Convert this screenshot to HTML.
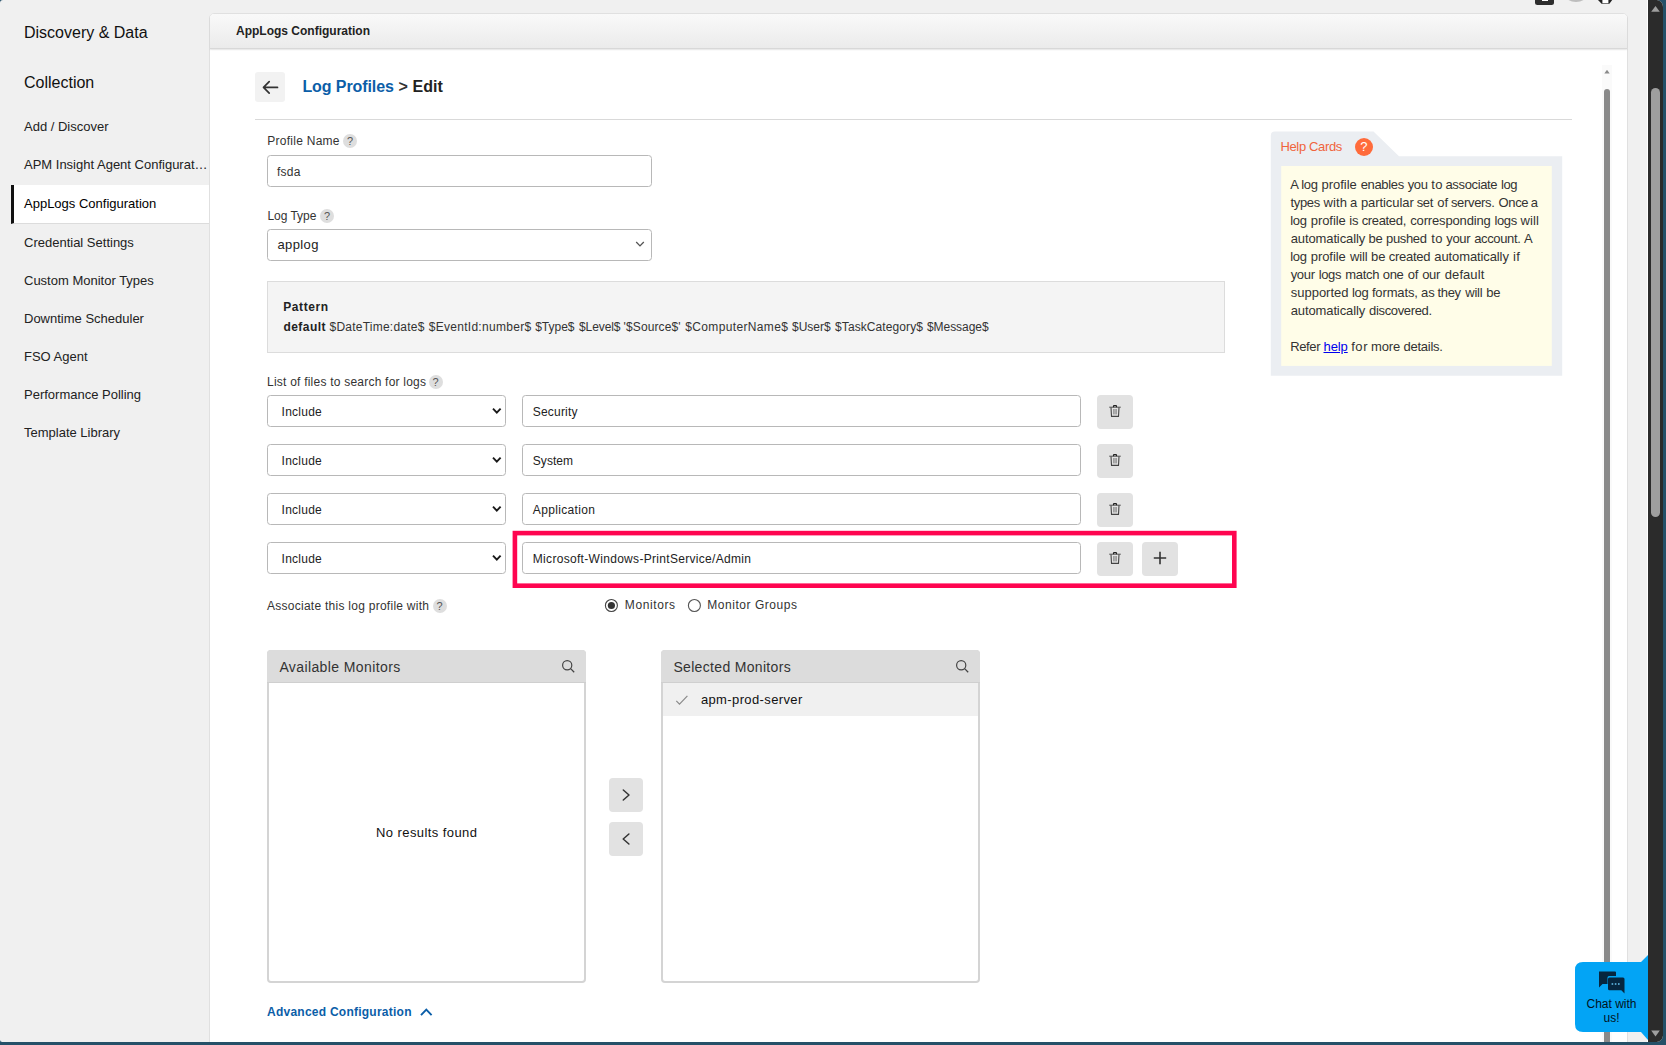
<!DOCTYPE html><html><head><meta charset="utf-8"><title>AppLogs Configuration</title><style>
*{box-sizing:border-box;margin:0;padding:0}
html,body{width:1666px;height:1045px;overflow:hidden;background:#255068;font-family:"Liberation Sans",sans-serif;}
#win{position:absolute;left:0;top:0;width:1663px;height:1042px;overflow:hidden;background:#f0f0f0;border-radius:3px 6.5px 6.5px 2.5px;}
.t{position:absolute;white-space:nowrap;}
.a{position:absolute;}
.inp{position:absolute;background:#fff;border:1px solid #b8b8b8;border-radius:3.5px;}
.btn{position:absolute;background:#e2e2e2;border-radius:4px;}
.q{position:absolute;width:14px;height:14px;border-radius:7px;background:#dedede;color:#555;font-size:11px;line-height:14px;text-align:center;}
</style></head><body>
<div id="win">
<div class="a" style="left:1648px;top:0;width:15px;height:1042px;background:#2b2b2b;"></div>
<div class="a" style="left:1647px;top:0;width:1px;height:1042px;background:#fff;"></div>
<div class="a" style="left:1651px;top:88px;width:9px;height:429px;background:#9e9e9e;border-radius:4.5px;"></div>
<svg class="a" style="left:1648px;top:0" width="15" height="1042"><path d="M3.2 11.8 L7.5 6 L11.8 11.8Z" fill="#9e9e9e"/><path d="M3.2 1030.5 L11.8 1030.5 L7.5 1036.5Z" fill="#9e9e9e"/></svg>
<div class="a" style="left:1534.5px;top:-6px;width:19.5px;height:11px;background:#2e2e2e;border-radius:2.5px;"></div>
<div class="a" style="left:1542px;top:-3px;width:6px;height:4px;background:#fff;"></div>
<div class="a" style="left:1560.5px;top:-28px;width:30px;height:30px;background:#bdbdbd;border-radius:15px;"></div>
<svg class="a" style="left:1596px;top:0" width="20" height="6"><path d="M2 0 L16.2 0 L13.4 3.7 L5.6 3.7Z" fill="#222"/><rect x="6.4" y="0" width="6" height="3.2" fill="#fff"/></svg>
<div class="t" style="left:24.00px;top:22.50px;font-size:16px;line-height:20px;color:#111;">Discovery &amp; Data</div>
<div class="t" style="left:24.00px;top:72.50px;font-size:16px;line-height:20px;color:#111;">Collection</div>
<div class="a" style="left:11px;top:184.5px;width:198px;height:39px;background:#fff;border-left:3px solid #111;border-bottom:1px solid #dcdcdc;"></div>
<div class="t" style="left:24.00px;top:116.50px;font-size:13px;line-height:20px;color:#222;">Add / Discover</div>
<div class="t" style="left:24.00px;top:154.50px;font-size:13px;line-height:20px;color:#222;">APM Insight Agent Configurat…</div>
<div class="t" style="left:24.00px;top:193.50px;font-size:13px;line-height:20px;color:#000;">AppLogs Configuration</div>
<div class="t" style="left:24.00px;top:232.50px;font-size:13px;line-height:20px;color:#222;">Credential Settings</div>
<div class="t" style="left:24.00px;top:270.50px;font-size:13px;line-height:20px;color:#222;">Custom Monitor Types</div>
<div class="t" style="left:24.00px;top:308.50px;font-size:13px;line-height:20px;color:#222;">Downtime Scheduler</div>
<div class="t" style="left:24.00px;top:346.50px;font-size:13px;line-height:20px;color:#222;">FSO Agent</div>
<div class="t" style="left:24.00px;top:384.50px;font-size:13px;line-height:20px;color:#222;">Performance Polling</div>
<div class="t" style="left:24.00px;top:422.50px;font-size:13px;line-height:20px;color:#222;">Template Library</div>
<div class="a" style="left:209px;top:13px;width:1419px;height:1040px;background:#fff;border:1px solid #e0e0e0;border-radius:5px 5px 0 0;"></div>
<div class="a" style="left:210px;top:14px;width:1417px;height:34.5px;background:linear-gradient(#f9f9f9,#ebebeb);border-radius:4px 4px 0 0;border-bottom:1px solid #d8d8d8;box-shadow:0 1px 1.5px rgba(0,0,0,.10);"></div>
<div class="t" style="left:236.00px;top:21.00px;font-size:12px;line-height:20px;color:#222;font-weight:bold;">AppLogs Configuration</div>
<div class="a" style="left:1602px;top:65px;width:10px;height:980px;background:#fafafa;"></div>
<div class="a" style="left:1604px;top:89px;width:6px;height:960px;background:#8a8a8a;border-radius:3px;"></div>
<svg class="a" style="left:1602px;top:65px" width="10" height="12"><path d="M2.3 8.6 L5 4.8 L7.7 8.6Z" fill="#8a8a8a"/></svg>
<div class="a" style="left:255px;top:72px;width:30px;height:30px;background:#f2f2f2;border-radius:3px;"></div>
<svg class="a" style="left:255px;top:72px" width="30" height="30"><path d="M22.5 15.4 H8.8 M14.2 9.7 L8.5 15.4 L14.2 21.1" fill="none" stroke="#333" stroke-width="1.7" stroke-linecap="round" stroke-linejoin="round"/></svg>
<div class="t" style="left:302.40px;top:76.50px;font-size:16px;line-height:20px;color:#0b5ea8;letter-spacing:-0.087px;font-weight:bold;">Log Profiles</div>
<div class="t" style="left:398.60px;top:76.50px;font-size:16px;line-height:20px;color:#333;font-weight:bold;">&gt;</div>
<div class="t" style="left:412.60px;top:76.50px;font-size:16px;line-height:20px;color:#222;letter-spacing:0.027px;font-weight:bold;">Edit</div>
<div class="a" style="left:255px;top:119px;width:1317px;height:1px;background:#d9d9d9;"></div>
<div class="t" style="left:267.30px;top:131.00px;font-size:12px;line-height:20px;color:#333;letter-spacing:0.258px;">Profile Name</div>
<div class="q" style="left:343px;top:133.8px;">?</div>
<div class="inp" style="left:267px;top:155px;width:385px;height:31.5px;"></div>
<div class="t" style="left:277.00px;top:162.00px;font-size:12px;line-height:20px;color:#333;letter-spacing:0.239px;">fsda</div>
<div class="t" style="left:267.40px;top:206.00px;font-size:12px;line-height:20px;color:#333;letter-spacing:-0.022px;">Log Type</div>
<div class="q" style="left:320px;top:208.8px;">?</div>
<div class="inp" style="left:267px;top:229px;width:385px;height:31.5px;"></div>
<div class="t" style="left:277.40px;top:234.50px;font-size:13px;line-height:20px;color:#222;letter-spacing:0.412px;">applog</div>
<svg class="a" style="left:634px;top:239px" width="12" height="10"><path d="M2.2 3 L6 6.9 L9.8 3" fill="none" stroke="#555" stroke-width="1.3"/></svg>
<div class="a" style="left:267px;top:281px;width:958px;height:71.5px;background:#f4f4f4;border:1px solid #dcdcdc;"></div>
<div class="t" style="left:283.20px;top:297.00px;font-size:12px;line-height:20px;color:#222;letter-spacing:0.609px;font-weight:bold;">Pattern</div>
<div class="t" style="left:283.40px;top:317.00px;font-size:12px;line-height:20px;color:#222;letter-spacing:0.478px;font-weight:bold;">default</div>
<div class="t" style="left:329.50px;top:317.00px;font-size:12px;line-height:20px;color:#333;letter-spacing:0.235px;">$DateTime:date$</div>
<div class="t" style="left:428.70px;top:317.00px;font-size:12px;line-height:20px;color:#333;letter-spacing:0.289px;">$EventId:number$</div>
<div class="t" style="left:535.20px;top:317.00px;font-size:12px;line-height:20px;color:#333;letter-spacing:-0.013px;">$Type$</div>
<div class="t" style="left:579.00px;top:317.00px;font-size:12px;line-height:20px;color:#333;letter-spacing:-0.089px;">$Level$</div>
<div class="t" style="left:623.60px;top:317.00px;font-size:12px;line-height:20px;color:#333;letter-spacing:0.116px;">'$Source$'</div>
<div class="t" style="left:685.20px;top:317.00px;font-size:12px;line-height:20px;color:#333;letter-spacing:0.358px;">$ComputerName$</div>
<div class="t" style="left:792.00px;top:317.00px;font-size:12px;line-height:20px;color:#333;letter-spacing:0.003px;">$User$</div>
<div class="t" style="left:835.10px;top:317.00px;font-size:12px;line-height:20px;color:#333;letter-spacing:0.084px;">$TaskCategory$</div>
<div class="t" style="left:927.00px;top:317.00px;font-size:12px;line-height:20px;color:#333;letter-spacing:-0.055px;">$Message$</div>
<div class="t" style="left:267.00px;top:372.00px;font-size:12px;line-height:20px;color:#333;letter-spacing:0.224px;">List of files to search for logs</div>
<div class="q" style="left:428.5px;top:375px;">?</div>
<div class="inp" style="left:267px;top:395.2px;width:239px;height:31.5px;"></div>
<div class="t" style="left:281.60px;top:402.00px;font-size:12px;line-height:20px;color:#222;letter-spacing:0.251px;">Include</div>
<svg class="a" style="left:490px;top:405.2px" width="14" height="12"><path d="M3 3.6 L6.8 7.6 L10.6 3.6" fill="none" stroke="#1a1a1a" stroke-width="1.9"/></svg>
<div class="inp" style="left:522px;top:395.2px;width:559px;height:31.5px;"></div>
<div class="t" style="left:532.80px;top:402.00px;font-size:12px;line-height:20px;color:#222;letter-spacing:0.193px;">Security</div>
<div class="btn" style="left:1097px;top:395.0px;width:36px;height:34px;"></div>
<svg class="a" style="left:1108px;top:404.2px" width="14" height="14" viewBox="0 0 14 14"><path d="M1.2 3.2 H12.8" stroke="#555" stroke-width="1" fill="none"/><path d="M5.5 3.2 V2.2 Q5.5 1.6 6.1 1.6 H7.9 Q8.5 1.6 8.5 2.2 V3.2" stroke="#222" stroke-width="1.2" fill="none"/><path d="M3 3.4 L3.5 12.4 H10.5 L11 3.4" stroke="#444" stroke-width="1.1" fill="none" stroke-linejoin="round"/><path d="M5.7 5 V10.4 M7 5 V10.4 M8.3 5 V10.4" stroke="#777" stroke-width="0.8" fill="none"/></svg>
<div class="inp" style="left:267px;top:444.2px;width:239px;height:31.5px;"></div>
<div class="t" style="left:281.60px;top:451.00px;font-size:12px;line-height:20px;color:#222;letter-spacing:0.251px;">Include</div>
<svg class="a" style="left:490px;top:454.2px" width="14" height="12"><path d="M3 3.6 L6.8 7.6 L10.6 3.6" fill="none" stroke="#1a1a1a" stroke-width="1.9"/></svg>
<div class="inp" style="left:522px;top:444.2px;width:559px;height:31.5px;"></div>
<div class="t" style="left:532.80px;top:451.00px;font-size:12px;line-height:20px;color:#222;letter-spacing:0.038px;">System</div>
<div class="btn" style="left:1097px;top:444.0px;width:36px;height:34px;"></div>
<svg class="a" style="left:1108px;top:453.2px" width="14" height="14" viewBox="0 0 14 14"><path d="M1.2 3.2 H12.8" stroke="#555" stroke-width="1" fill="none"/><path d="M5.5 3.2 V2.2 Q5.5 1.6 6.1 1.6 H7.9 Q8.5 1.6 8.5 2.2 V3.2" stroke="#222" stroke-width="1.2" fill="none"/><path d="M3 3.4 L3.5 12.4 H10.5 L11 3.4" stroke="#444" stroke-width="1.1" fill="none" stroke-linejoin="round"/><path d="M5.7 5 V10.4 M7 5 V10.4 M8.3 5 V10.4" stroke="#777" stroke-width="0.8" fill="none"/></svg>
<div class="inp" style="left:267px;top:493.2px;width:239px;height:31.5px;"></div>
<div class="t" style="left:281.60px;top:500.00px;font-size:12px;line-height:20px;color:#222;letter-spacing:0.251px;">Include</div>
<svg class="a" style="left:490px;top:503.2px" width="14" height="12"><path d="M3 3.6 L6.8 7.6 L10.6 3.6" fill="none" stroke="#1a1a1a" stroke-width="1.9"/></svg>
<div class="inp" style="left:522px;top:493.2px;width:559px;height:31.5px;"></div>
<div class="t" style="left:532.80px;top:500.00px;font-size:12px;line-height:20px;color:#222;letter-spacing:0.349px;">Application</div>
<div class="btn" style="left:1097px;top:493.0px;width:36px;height:34px;"></div>
<svg class="a" style="left:1108px;top:502.2px" width="14" height="14" viewBox="0 0 14 14"><path d="M1.2 3.2 H12.8" stroke="#555" stroke-width="1" fill="none"/><path d="M5.5 3.2 V2.2 Q5.5 1.6 6.1 1.6 H7.9 Q8.5 1.6 8.5 2.2 V3.2" stroke="#222" stroke-width="1.2" fill="none"/><path d="M3 3.4 L3.5 12.4 H10.5 L11 3.4" stroke="#444" stroke-width="1.1" fill="none" stroke-linejoin="round"/><path d="M5.7 5 V10.4 M7 5 V10.4 M8.3 5 V10.4" stroke="#777" stroke-width="0.8" fill="none"/></svg>
<div class="inp" style="left:267px;top:542.2px;width:239px;height:31.5px;"></div>
<div class="t" style="left:281.60px;top:549.00px;font-size:12px;line-height:20px;color:#222;letter-spacing:0.251px;">Include</div>
<svg class="a" style="left:490px;top:552.2px" width="14" height="12"><path d="M3 3.6 L6.8 7.6 L10.6 3.6" fill="none" stroke="#1a1a1a" stroke-width="1.9"/></svg>
<div class="inp" style="left:522px;top:542.2px;width:559px;height:31.5px;"></div>
<div class="t" style="left:532.80px;top:549.00px;font-size:12px;line-height:20px;color:#222;letter-spacing:0.309px;">Microsoft-Windows-PrintService/Admin</div>
<div class="btn" style="left:1097px;top:542.0px;width:36px;height:34px;"></div>
<svg class="a" style="left:1108px;top:551.2px" width="14" height="14" viewBox="0 0 14 14"><path d="M1.2 3.2 H12.8" stroke="#555" stroke-width="1" fill="none"/><path d="M5.5 3.2 V2.2 Q5.5 1.6 6.1 1.6 H7.9 Q8.5 1.6 8.5 2.2 V3.2" stroke="#222" stroke-width="1.2" fill="none"/><path d="M3 3.4 L3.5 12.4 H10.5 L11 3.4" stroke="#444" stroke-width="1.1" fill="none" stroke-linejoin="round"/><path d="M5.7 5 V10.4 M7 5 V10.4 M8.3 5 V10.4" stroke="#777" stroke-width="0.8" fill="none"/></svg>
<div class="btn" style="left:1142px;top:542px;width:36px;height:34px;"></div>
<svg class="a" style="left:1152px;top:550px" width="16" height="16"><path d="M8 1.8 V14.2 M1.8 8 H14.2" stroke="#333" stroke-width="1.6" fill="none"/></svg>
<svg class="a" style="left:510px;top:528px" width="730" height="64"><rect x="4.9" y="5.1" width="719.4" height="52.6" fill="none" stroke="#ff0550" stroke-width="4.6"/></svg>
<div class="t" style="left:267.00px;top:596.00px;font-size:12px;line-height:20px;color:#333;letter-spacing:0.264px;">Associate this log profile with</div>
<div class="q" style="left:432.5px;top:599px;">?</div>
<svg class="a" style="left:603px;top:597px" width="110" height="17"><circle cx="8.4" cy="8.5" r="6" fill="#fff" stroke="#444" stroke-width="1.1"/><circle cx="8.4" cy="8.5" r="3.6" fill="#333"/><circle cx="91.4" cy="8.5" r="6" fill="#fff" stroke="#555" stroke-width="1.1"/></svg>
<div class="t" style="left:624.80px;top:595.00px;font-size:12px;line-height:20px;color:#333;letter-spacing:0.598px;">Monitors</div>
<div class="t" style="left:707.30px;top:595.00px;font-size:12px;line-height:20px;color:#333;letter-spacing:0.538px;">Monitor Groups</div>
<div class="a" style="left:267px;top:650px;width:319px;height:332.5px;background:#fff;border:2px solid #d4d4d4;border-radius:4px;"></div>
<div class="a" style="left:267px;top:650px;width:319px;height:32.5px;background:#dcdcdc;border-radius:4px 4px 0 0;border-bottom:1px solid #cfcfcf;"></div>
<div class="t" style="left:279.40px;top:657.00px;font-size:14px;line-height:20px;color:#333;letter-spacing:0.392px;">Available Monitors</div>
<svg class="a" style="left:561px;top:659px" width="15" height="15"><circle cx="6.2" cy="6.2" r="4.6" fill="none" stroke="#444" stroke-width="1.2"/><path d="M9.6 9.6 L13.2 13.2" stroke="#444" stroke-width="1.3"/></svg>
<div class="a" style="left:661px;top:650px;width:319px;height:332.5px;background:#fff;border:2px solid #d4d4d4;border-radius:4px;"></div>
<div class="a" style="left:661px;top:650px;width:319px;height:32.5px;background:#dcdcdc;border-radius:4px 4px 0 0;border-bottom:1px solid #cfcfcf;"></div>
<div class="t" style="left:673.40px;top:657.00px;font-size:14px;line-height:20px;color:#333;letter-spacing:0.328px;">Selected Monitors</div>
<svg class="a" style="left:955px;top:659px" width="15" height="15"><circle cx="6.2" cy="6.2" r="4.6" fill="none" stroke="#444" stroke-width="1.2"/><path d="M9.6 9.6 L13.2 13.2" stroke="#444" stroke-width="1.3"/></svg>
<div class="a" style="left:663px;top:683px;width:315px;height:32.5px;background:#f0f0f0;"></div>
<svg class="a" style="left:675px;top:694px" width="14" height="12"><path d="M1.3 6.9 L4.5 10.2 L12.4 1.8" fill="none" stroke="#8a8a8a" stroke-width="1.2"/></svg>
<div class="t" style="left:700.90px;top:689.50px;font-size:13px;line-height:20px;color:#111;letter-spacing:0.380px;">apm-prod-server</div>
<div class="t" style="left:376.00px;top:822.50px;font-size:13px;line-height:20px;color:#111;letter-spacing:0.422px;">No results found</div>
<div class="btn" style="left:609px;top:778px;width:34px;height:34px;border-radius:4px;"></div>
<svg class="a" style="left:618px;top:787px" width="16" height="16"><path d="M5.3 3 L11 8 L5.3 13" fill="none" stroke="#333" stroke-width="1.5" stroke-linecap="round" stroke-linejoin="round"/></svg>
<div class="btn" style="left:609px;top:822px;width:34px;height:34px;border-radius:4px;"></div>
<svg class="a" style="left:618px;top:831px" width="16" height="16"><path d="M10.9 3 L5.2 8 L10.9 13" fill="none" stroke="#333" stroke-width="1.5" stroke-linecap="round" stroke-linejoin="round"/></svg>
<div class="t" style="left:267.00px;top:1002.00px;font-size:12px;line-height:20px;color:#0b5ea8;letter-spacing:0.246px;font-weight:bold;">Advanced Configuration</div>
<svg class="a" style="left:418px;top:1005px" width="17" height="14"><path d="M3 10.2 L8.3 4.6 L13.6 10.2" fill="none" stroke="#0b5ea8" stroke-width="1.9"/></svg>
<svg class="a" style="left:1270px;top:131px" width="294" height="246"><path d="M0.8 4.6 Q0.8 0.6 4.8 0.6 H103.5 L129 25.2 H292.2 V244.7 H0.8Z" fill="#ebeef2"/><rect x="11.2" y="35" width="270.6" height="199.9" fill="#fffde8"/></svg>
<div class="t" style="left:1280.46px;top:136.50px;font-size:13px;line-height:20px;color:#f0643c;letter-spacing:-0.350px;">Help Cards</div>
<div class="a" style="left:1354.8px;top:137.6px;width:18px;height:18px;border-radius:9px;background:#ff6b3b;color:#fff;font-size:13px;line-height:18px;text-align:center;">?</div>
<div class="t" style="left:1290.31px;top:174.50px;font-size:13px;line-height:20px;color:#333;letter-spacing:-0.100px;">A</div>
<div class="t" style="left:1301.30px;top:174.50px;font-size:13px;line-height:20px;color:#333;letter-spacing:-0.350px;">log</div>
<div class="t" style="left:1321.49px;top:174.50px;font-size:13px;line-height:20px;color:#333;letter-spacing:-0.023px;">profile</div>
<div class="t" style="left:1360.71px;top:174.50px;font-size:13px;line-height:20px;color:#333;letter-spacing:-0.350px;">enables</div>
<div class="t" style="left:1407.64px;top:174.50px;font-size:13px;line-height:20px;color:#333;letter-spacing:-0.350px;">you</div>
<div class="t" style="left:1431.19px;top:174.50px;font-size:13px;line-height:20px;color:#333;letter-spacing:0.394px;">to</div>
<div class="t" style="left:1445.47px;top:174.50px;font-size:13px;line-height:20px;color:#333;letter-spacing:-0.350px;">associate</div>
<div class="t" style="left:1500.89px;top:174.50px;font-size:13px;line-height:20px;color:#333;letter-spacing:-0.350px;">log</div>
<div class="t" style="left:1290.58px;top:192.50px;font-size:13px;line-height:20px;color:#333;letter-spacing:-0.350px;">types</div>
<div class="t" style="left:1323.51px;top:192.50px;font-size:13px;line-height:20px;color:#333;letter-spacing:0.097px;">with</div>
<div class="t" style="left:1350.10px;top:192.50px;font-size:13px;line-height:20px;color:#333;letter-spacing:-0.100px;">a</div>
<div class="t" style="left:1360.97px;top:192.50px;font-size:13px;line-height:20px;color:#333;letter-spacing:-0.080px;">particular</div>
<div class="t" style="left:1416.71px;top:192.50px;font-size:13px;line-height:20px;color:#333;letter-spacing:-0.350px;">set</div>
<div class="t" style="left:1437.29px;top:192.50px;font-size:13px;line-height:20px;color:#333;letter-spacing:-0.100px;">of</div>
<div class="t" style="left:1450.97px;top:192.50px;font-size:13px;line-height:20px;color:#333;letter-spacing:-0.350px;">servers.</div>
<div class="t" style="left:1498.50px;top:192.50px;font-size:13px;line-height:20px;color:#333;letter-spacing:-0.350px;">Once</div>
<div class="t" style="left:1530.81px;top:192.50px;font-size:13px;line-height:20px;color:#333;letter-spacing:-0.100px;">a</div>
<div class="t" style="left:1290.22px;top:210.50px;font-size:13px;line-height:20px;color:#333;letter-spacing:-0.350px;">log</div>
<div class="t" style="left:1310.72px;top:210.50px;font-size:13px;line-height:20px;color:#333;letter-spacing:-0.049px;">profile</div>
<div class="t" style="left:1349.30px;top:210.50px;font-size:13px;line-height:20px;color:#333;letter-spacing:-0.100px;">is</div>
<div class="t" style="left:1361.72px;top:210.50px;font-size:13px;line-height:20px;color:#333;letter-spacing:-0.350px;">created,</div>
<div class="t" style="left:1410.28px;top:210.50px;font-size:13px;line-height:20px;color:#333;letter-spacing:-0.155px;">corresponding</div>
<div class="t" style="left:1494.46px;top:210.50px;font-size:13px;line-height:20px;color:#333;letter-spacing:-0.350px;">logs</div>
<div class="t" style="left:1520.46px;top:210.50px;font-size:13px;line-height:20px;color:#333;letter-spacing:0.121px;">will</div>
<div class="t" style="left:1290.74px;top:228.50px;font-size:13px;line-height:20px;color:#333;letter-spacing:-0.119px;">automatically</div>
<div class="t" style="left:1368.46px;top:228.50px;font-size:13px;line-height:20px;color:#333;letter-spacing:-0.100px;">be</div>
<div class="t" style="left:1386.08px;top:228.50px;font-size:13px;line-height:20px;color:#333;letter-spacing:-0.350px;">pushed</div>
<div class="t" style="left:1431.19px;top:228.50px;font-size:13px;line-height:20px;color:#333;letter-spacing:0.394px;">to</div>
<div class="t" style="left:1446.30px;top:228.50px;font-size:13px;line-height:20px;color:#333;letter-spacing:-0.350px;">your</div>
<div class="t" style="left:1474.17px;top:228.50px;font-size:13px;line-height:20px;color:#333;letter-spacing:-0.350px;">account.</div>
<div class="t" style="left:1523.92px;top:228.50px;font-size:13px;line-height:20px;color:#333;letter-spacing:-0.100px;">A</div>
<div class="t" style="left:1290.22px;top:246.50px;font-size:13px;line-height:20px;color:#333;letter-spacing:-0.350px;">log</div>
<div class="t" style="left:1310.72px;top:246.50px;font-size:13px;line-height:20px;color:#333;letter-spacing:-0.049px;">profile</div>
<div class="t" style="left:1350.04px;top:246.50px;font-size:13px;line-height:20px;color:#333;letter-spacing:-0.140px;">will</div>
<div class="t" style="left:1371.11px;top:246.50px;font-size:13px;line-height:20px;color:#333;letter-spacing:-0.100px;">be</div>
<div class="t" style="left:1388.74px;top:246.50px;font-size:13px;line-height:20px;color:#333;letter-spacing:-0.282px;">created</div>
<div class="t" style="left:1434.31px;top:246.50px;font-size:13px;line-height:20px;color:#333;letter-spacing:-0.106px;">automatically</div>
<div class="t" style="left:1513.12px;top:246.50px;font-size:13px;line-height:20px;color:#333;letter-spacing:0.210px;">if</div>
<div class="t" style="left:1290.72px;top:264.50px;font-size:13px;line-height:20px;color:#333;letter-spacing:-0.350px;">your</div>
<div class="t" style="left:1318.67px;top:264.50px;font-size:13px;line-height:20px;color:#333;letter-spacing:-0.350px;">logs</div>
<div class="t" style="left:1345.36px;top:264.50px;font-size:13px;line-height:20px;color:#333;letter-spacing:-0.345px;">match</div>
<div class="t" style="left:1382.85px;top:264.50px;font-size:13px;line-height:20px;color:#333;letter-spacing:-0.350px;">one</div>
<div class="t" style="left:1407.64px;top:264.50px;font-size:13px;line-height:20px;color:#333;letter-spacing:-0.100px;">of</div>
<div class="t" style="left:1422.14px;top:264.50px;font-size:13px;line-height:20px;color:#333;letter-spacing:-0.343px;">our</div>
<div class="t" style="left:1444.77px;top:264.50px;font-size:13px;line-height:20px;color:#333;letter-spacing:0.075px;">default</div>
<div class="t" style="left:1290.74px;top:282.50px;font-size:13px;line-height:20px;color:#333;letter-spacing:-0.010px;">supported</div>
<div class="t" style="left:1352.02px;top:282.50px;font-size:13px;line-height:20px;color:#333;letter-spacing:-0.350px;">log</div>
<div class="t" style="left:1371.89px;top:282.50px;font-size:13px;line-height:20px;color:#333;letter-spacing:-0.131px;">formats,</div>
<div class="t" style="left:1421.02px;top:282.50px;font-size:13px;line-height:20px;color:#333;letter-spacing:-0.100px;">as</div>
<div class="t" style="left:1437.53px;top:282.50px;font-size:13px;line-height:20px;color:#333;letter-spacing:-0.350px;">they</div>
<div class="t" style="left:1465.21px;top:282.50px;font-size:13px;line-height:20px;color:#333;letter-spacing:-0.192px;">will</div>
<div class="t" style="left:1486.20px;top:282.50px;font-size:13px;line-height:20px;color:#333;letter-spacing:-0.100px;">be</div>
<div class="t" style="left:1290.74px;top:300.50px;font-size:13px;line-height:20px;color:#333;letter-spacing:-0.119px;">automatically</div>
<div class="t" style="left:1369.12px;top:300.50px;font-size:13px;line-height:20px;color:#333;letter-spacing:-0.350px;">discovered.</div>
<div class="t" style="left:1290.16px;top:336.50px;font-size:13px;line-height:20px;color:#333;letter-spacing:-0.350px;">Refer</div>
<div class="t" style="left:1323.50px;top:336.50px;font-size:13px;line-height:20px;color:#333;letter-spacing:-0.093px;"><span style="color:#0000ee;text-decoration:underline;">help</span></div>
<div class="t" style="left:1351.20px;top:336.50px;font-size:13px;line-height:20px;color:#333;letter-spacing:0.564px;">for</div>
<div class="t" style="left:1371.10px;top:336.50px;font-size:13px;line-height:20px;color:#333;letter-spacing:-0.139px;">more</div>
<div class="t" style="left:1403.60px;top:336.50px;font-size:13px;line-height:20px;color:#333;letter-spacing:-0.270px;">details.</div>
<svg class="a" style="left:1575px;top:954px" width="74" height="88"><path d="M8 8 H66 L73 1 V86 L66 78 H8 Q0 78 0 70 V16 Q0 8 8 8Z" fill="#03a4f5"/><path d="M24 17.5 H40 Q41 17.5 41 18.5 V22 H34 Q32.5 22 32.5 23.5 V30 H27.5 L24 33.5 V30 Q24 30 24 29 Z" fill="#06263f"/><path d="M34.5 23.5 H48 Q49.5 23.5 49.5 25 V39.5 L46.3 36.3 H34.5 Q33 36.3 33 34.8 V25 Q33 23.5 34.5 23.5Z" fill="#06263f"/><rect x="36.6" y="29.3" width="1.6" height="1.4" fill="#6fd0ff"/><rect x="39.8" y="29.3" width="1.6" height="1.4" fill="#6fd0ff"/><rect x="43" y="29.3" width="1.6" height="1.4" fill="#6fd0ff"/></svg>
<div class="t" style="left:1575px;top:997px;width:73px;text-align:center;font-size:12px;line-height:14px;color:#021320;white-space:normal;">Chat with<br>us!</div>
</div></body></html>
